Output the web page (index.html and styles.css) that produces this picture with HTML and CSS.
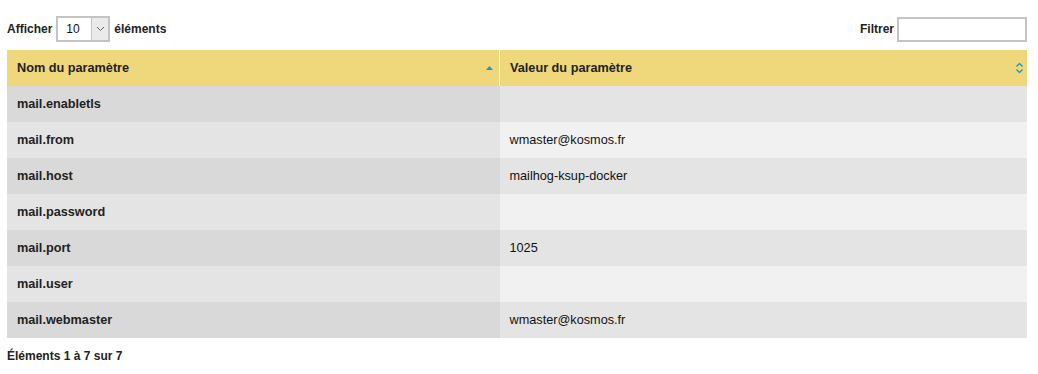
FILE: index.html
```html
<!DOCTYPE html>
<html lang="fr">
<head>
<meta charset="utf-8">
<link rel="stylesheet" href="styles.css">
</head>
<body>
<div class="wrap">
  <div class="top">
    <label class="length">Afficher
      <span class="select"><span class="val">10</span><span class="arrow"><svg width="9" height="6" viewBox="0 0 9 6"><path d="M1 1l3.5 3.5L8 1" fill="none" stroke="#666" stroke-width="1"/></svg></span></span>
      éléments</label>
    <label class="filter">Filtrer <span class="input"></span></label>
  </div>
  <table class="grid">
    <thead>
      <tr>
        <th class="c1">Nom du paramètre<span class="sort asc"><svg width="7" height="4" viewBox="0 0 7 4"><path d="M0 4L3.5 0L7 4Z" fill="#1a9bbf"/></svg></span></th>
        <th class="c2">Valeur du paramètre<span class="sort both"><svg width="7" height="11" viewBox="0 0 7 11"><path d="M0.5 4L3.5 1L6.5 4" fill="none" stroke="#1a9bbf" stroke-width="1.4"/><path d="M0.5 7L3.5 10L6.5 7" fill="none" stroke="#1a9bbf" stroke-width="1.4"/></svg></span></th>
      </tr>
    </thead>
    <tbody>
      <tr class="odd"><td class="k">mail.enabletls</td><td></td></tr>
      <tr class="even"><td class="k">mail.from</td><td>wmaster@kosmos.fr</td></tr>
      <tr class="odd"><td class="k">mail.host</td><td>mailhog-ksup-docker</td></tr>
      <tr class="even"><td class="k">mail.password</td><td></td></tr>
      <tr class="odd"><td class="k">mail.port</td><td>1025</td></tr>
      <tr class="even"><td class="k">mail.user</td><td></td></tr>
      <tr class="odd"><td class="k">mail.webmaster</td><td>wmaster@kosmos.fr</td></tr>
    </tbody>
  </table>
  <div class="info">Éléments 1 à 7 sur 7</div>
</div>
</body>
</html>
```

FILE: styles.css
```css
html, body { margin: 0; padding: 0; background: #fff; }
body { font-family: "Liberation Sans", Arial, sans-serif; font-size: 12px; color: #222; }
.wrap { padding: 15px 11px 0 7px; }
.top { display: flex; justify-content: space-between; align-items: center; height: 28px; margin-bottom: 7px; }
.length, .filter { font-weight: bold; display: flex; align-items: center; gap: 4px; color: #222; }
.select { display: inline-flex; width: 54px; height: 26px; box-sizing: border-box; border: 2px solid #c4c4c4; background: #fff; font-weight: normal; }
.select .val { flex: 1; padding-left: 8px; line-height: 22px; color: #111; }
.select .arrow { width: 16px; border-left: 1px solid #c4c4c4; background: #eaeaea; display: flex; align-items: center; justify-content: center; }
.input { display: inline-block; width: 130px; height: 25px; box-sizing: border-box; border: 2px solid #c4c4c4; background: #fff; margin-left: 0; }
.filter { gap: 3px; }
.grid { width: 1020px; border-collapse: collapse; table-layout: fixed; font-size: 12.7px; }
.grid th { background: #efd87b; height: 36px; text-align: left; padding: 0 10px; font-weight: bold; position: relative; color: #222; }
.grid th.c1 { width: 472px; }
.grid th.c2 { border-left: 1px solid #fff; }
.sort { position: absolute; right: 8px; top: 50%; transform: translateY(-50%); display: flex; }
.sort.asc { right: 6px; }
.sort.both { right: 4px; }
.grid td { height: 36px; padding: 0 10px; color: #111; }
.grid td.k { font-weight: bold; color: #222; }
.grid tr.odd td { background: #e4e4e4; }
.grid tr.odd td.k { background: #d9d9d9; }
.grid tr.even td { background: #f1f1f1; }
.grid tr.even td.k { background: #e4e4e4; }
.info { font-weight: bold; margin-top: 11px; color: #222; }
```
